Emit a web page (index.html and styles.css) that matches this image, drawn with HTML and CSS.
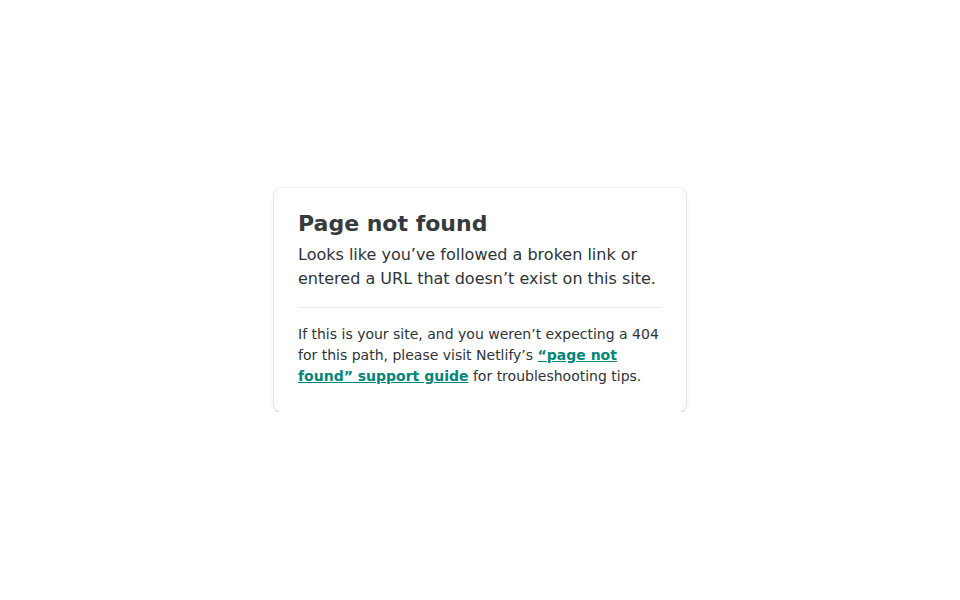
FILE: index.html
```html
<!DOCTYPE html>
<html>
<head>
<meta charset="utf-8">
<title>Page not found</title>
<link rel="stylesheet" href="styles.css">
</head>
<body>
<div class="main">
  <div class="card">
    <h1>Page not found</h1>
    <p class="lead">Looks like you’ve followed a broken link or entered a URL that doesn’t exist on this site.</p>
    <hr>
    <p class="small">If this is your site, and you weren’t expecting a 404 for this path, please visit Netlify’s <a href="#">“page not found” support guide</a> for troubleshooting tips.</p>
  </div>
</div>
</body>
</html>
```
FILE: styles.css
```css
html, body {
  margin: 0;
  padding: 0;
  background: #ffffff;
}
body {
  font-family: "DejaVu Sans", sans-serif;
  color: #2e3338;
}
.main {
  width: 412px;
  margin: 0 auto;
  padding-top: 188px;
}
.card {
  background: #fff;
  border-radius: 8px;
  box-shadow: 0 0 0 1px rgba(14, 30, 37, 0.05), 0 2px 4px 0 rgba(14, 30, 37, 0.14);
  padding: 21px 24px 25px 24px;
}
h1 {
  margin: 0;
  font-size: 22px;
  line-height: 30px;
  font-weight: bold;
  color: #353a3e;
}
.lead {
  margin: 4px 0 16px;
  font-size: 16px;
  line-height: 24px;
}
hr {
  border: 0;
  height: 1px;
  background: #eceeee;
  margin: 0 0 16px;
}
.small {
  margin: 0;
  font-size: 14px;
  line-height: 21px;
}
a {
  color: #00857a;
  font-weight: bold;
  text-decoration: underline;
}
```
